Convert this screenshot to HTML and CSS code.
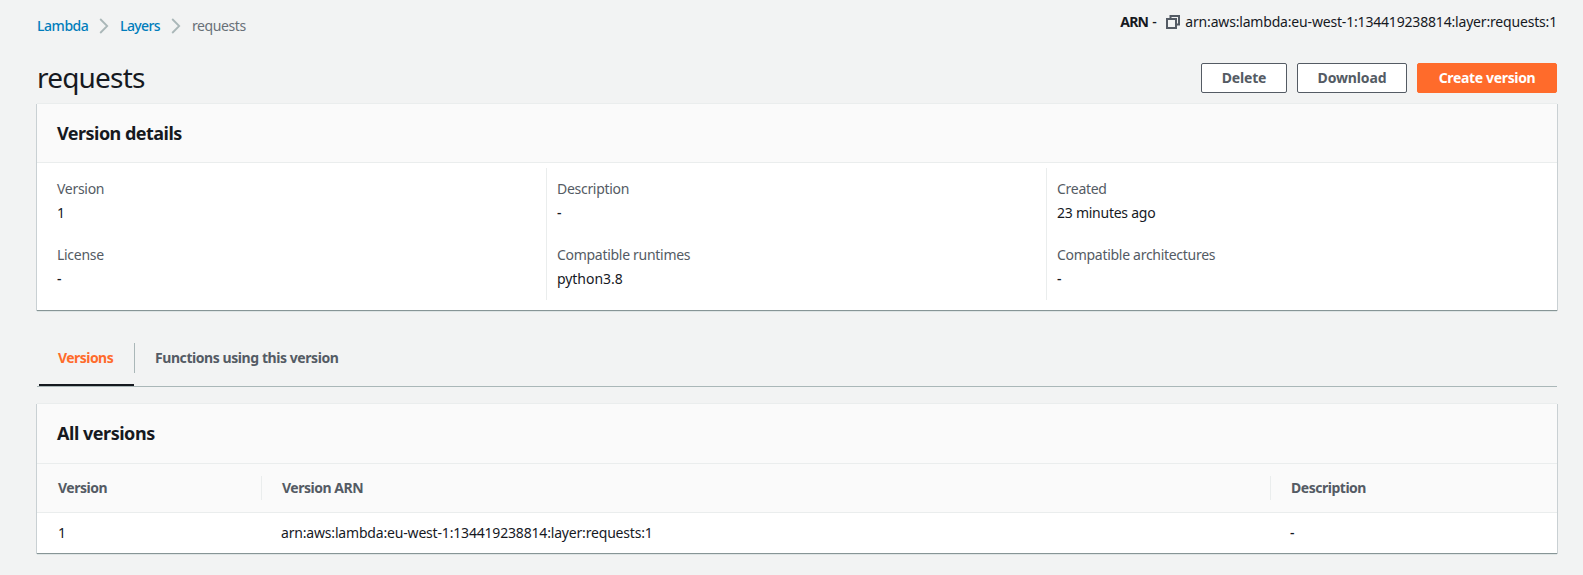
FILE: index.html
```
<!DOCTYPE html>
<html lang="en">
<head>
<meta charset="utf-8">
<title>requests - Layers - Lambda</title>
<link rel="stylesheet" href="styles.css">
</head>
<body>
<div class="topbar">
  <nav class="crumbs">
    <a class="crumb-lambda">Lambda</a>
    <svg class="chevron" width="10" height="16" viewBox="0 0 10 16"><path d="M1.2 1 8.2 8l-7 7"/></svg>
    <a class="crumb-layers">Layers</a>
    <svg class="chevron" width="10" height="16" viewBox="0 0 10 16"><path d="M1.2 1 8.2 8l-7 7"/></svg>
    <span>requests</span>
  </nav>
  <div class="arn">
    <b>ARN</b><span class="dash">-</span>
    <svg class="copy" width="14" height="14" viewBox="0 0 14 14"><path d="M1 4h9v9H1zM4.5 4V1H13v8.500H10"/></svg>
    <span class="arn-value">arn:aws:lambda:eu-west-1:134419238814:layer:requests:1</span>
  </div>
</div>
<header class="title-row">
  <h1>requests</h1>
  <div class="actions">
    <button class="btn delete">Delete</button>
    <button class="btn download">Download</button>
    <button class="btn primary">Create version</button>
  </div>
</header>
<section class="panel">
  <h2>Version details</h2>
  <div class="details">
    <dl class="col">
      <dt>Version</dt><dd>1</dd>
      <dt>License</dt><dd class="empty">-</dd>
    </dl>
    <dl class="col">
      <dt>Description</dt><dd class="empty">-</dd>
      <dt>Compatible runtimes</dt><dd class="runtime">python3.8</dd>
    </dl>
    <dl class="col">
      <dt>Created</dt><dd class="created">23 minutes ago</dd>
      <dt>Compatible architectures</dt><dd class="empty">-</dd>
    </dl>
  </div>
</section>
<div class="tabs">
  <a class="tab active">Versions</a>
  <a class="tab">Functions using this version</a>
</div>
<section class="panel">
  <h2 class="list-title">All versions</h2>
  <div class="row head">
    <div class="cell">Version</div>
    <div class="cell">Version ARN</div>
    <div class="cell">Description</div>
  </div>
  <div class="row">
    <div class="cell">1</div>
    <div class="cell">arn:aws:lambda:eu-west-1:134419238814:layer:requests:1</div>
    <div class="cell empty">-</div>
  </div>
</section>
</body>
</html>
```
FILE: styles.css
```
* { box-sizing: border-box; }
body {
  margin: 0;
  min-height: 575px;
  padding: 12px 26px 0 37px;
  background: #f2f3f3;
  color: #16191f;
  font: 14px/20px "Noto Sans", "Open Sans", sans-serif;
  letter-spacing: -0.18px;
}
h1, h2, dl, dd { margin: 0; }

.topbar { display: flex; justify-content: space-between; height: 51px; }
.crumbs { display: flex; padding-top: 4px; height: 24px; color: #687078; letter-spacing: -0.4px; }
.crumbs a { color: #007dbc; font-weight: 500; }
.crumb-lambda { width: 51px; letter-spacing: -0.45px; }
.crumb-layers { width: 40px; letter-spacing: -0.6px; }
.chevron { margin: 2px 11px 0 11px; fill: none; stroke: #aab7b8; stroke-width: 1.8; }
.arn { display: flex; height: 20px; }
.arn b { width: 32px; letter-spacing: -0.8px; }
.dash { width: 14px; font-weight: 500; }
.copy { margin: 3px 5px 0 0; fill: none; stroke: #545b64; stroke-width: 2; }

.title-row { display: flex; justify-content: space-between; height: 40px; }
h1 { font-size: 28px; line-height: 28px; font-weight: 400; letter-spacing: -0.8px; }
.actions { display: flex; gap: 10px; }
.btn {
  height: 30px;
  padding: 0;
  border: 1px solid #545b64;
  border-radius: 2px;
  background: #fff;
  color: #545b64;
  font: 700 14px/20px "Noto Sans", "Open Sans", sans-serif;
  letter-spacing: -0.15px;
}
.delete { width: 86px; }
.download { width: 110px; }
.primary { width: 140px; border-color: #ff6b2b; background: #ff6b2b; color: #fff; letter-spacing: -0.34px; }

.panel {
  background: #fff;
  border-top: 1px solid #eaeded;
  box-shadow: 0 1px 0 #879596, -1px 1px 0 #c9d0d3, 1px 1px 0 #c9d0d3, 0 2px 0 #dfe5e5;
}
h2 {
  height: 58px;
  padding: 17px 20px 0;
  font-size: 18px;
  line-height: 24px;
  font-weight: 700;
  letter-spacing: -0.53px;
  background: #fafafa;
}
.details { display: grid; grid-template-columns: 509px 500px 1fr; padding: 5px 0 10px; border-top: 1px solid #eaeded; }
.col { padding: 11px 10px; height: 132px; border-left: 1px solid #eaeded; }
.col:first-child { padding-left: 20px; border-left: 0; }
dt { color: #545b64; letter-spacing: -0.29px; }
dd { margin: 4px 0 22px; }
.runtime { letter-spacing: -0.05px; }
.created { letter-spacing: -0.25px; }
.empty { font-weight: 500; }

.tabs { display: flex; align-items: flex-start; height: 77px; border-bottom: 1px solid #aab7b8; }
.tab { padding: 38px 20px 0 21px; height: 76px; color: #545b64; font-weight: 700; letter-spacing: -0.43px; }
.active {
  width: 96px;
  margin-left: 2px;
  padding: 38px 0 0 19px;
  color: #ff6b2b;
  letter-spacing: -0.55px;
  background:
    linear-gradient(#aab7b8, #aab7b8) right 33px / 1px 30px no-repeat,
    linear-gradient(#16191f, #16191f) left bottom / 95px 2px no-repeat;
}
.active + .tab { padding-left: 20px; }
.tabs + .panel { margin-top: 16px; }

.list-title { letter-spacing: -0.47px; height: 59px; }
.row { display: grid; grid-template-columns: 224px 1009px 1fr; height: 40px; padding-top: 10px; }
.row .cell { padding-left: 20px; }
.row .cell:first-child { padding-left: 21px; }
.head {
  height: 50px;
  padding: 12px 0 0;
  background: #fafafa;
  border: solid #eaeded;
  border-width: 1px 0;
  color: #545b64;
  font-weight: 700;
  letter-spacing: -0.48px;
}
.head .cell { height: 24px; line-height: 24px; }
.head .cell + .cell { border-left: 1px solid #eaeded; margin-left: -1px; }
.head .cell + .cell { margin-left: 0; }
```
